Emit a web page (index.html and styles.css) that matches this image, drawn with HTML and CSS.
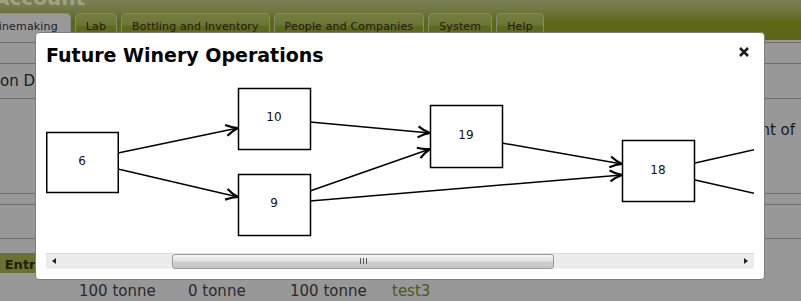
FILE: index.html
```html
<!DOCTYPE html>
<html>

<head>
  <meta charset="utf-8">
  <title>Account</title>
  <link rel="stylesheet" href="styles.css">
</head>

<body>
  <div class="header">
    <div class="brand"><span>Account</span></div>
    <ul class="tabs">
      <li class="tab active">Winemaking</li>
      <li class="tab">Lab</li>
      <li class="tab">Bottling and Inventory</li>
      <li class="tab">People and Companies</li>
      <li class="tab">System</li>
      <li class="tab">Help</li>
    </ul>
  </div>

  <div class="panel">
    <div class="row r1"></div>
    <div class="row r2">on Details</div>
    <div class="row r3"><span class="right">Amount of</span></div>
    <div class="row r4"></div>
    <div class="row r5"></div>
  </div>

  <div class="entry-label">t Entry</div>

  <div class="totals">
    <span class="c1">100 tonne</span>
    <span class="c2">0 tonne</span>
    <span class="c3">100 tonne</span>
    <span class="link">test3</span>
  </div>

  <div class="dialog">
    <div class="dialog-head">
      <h2 class="dialog-title">Future Winery Operations</h2>
      <span class="close">
        <svg width="10" height="10" viewBox="0 0 10 10">
          <path d="M1,1 L9,9 M9,1 L1,9" stroke="#1e1e1e" stroke-width="2.6" />
        </svg>
      </span>
    </div>

    <div class="scroller">
      <svg class="graph" width="708" height="168" viewBox="0 0 708 168">
        <defs>
          <marker id="arrow" viewBox="0 0 14 14" refX="13" refY="7" markerWidth="14" markerHeight="14"
            markerUnits="userSpaceOnUse" orient="auto">
            <path d="M1,1.5 Q7,5.5 13,7 Q7,8.5 1,12.5" fill="none" stroke="#000" stroke-width="2.2" />
          </marker>
        </defs>

        <g class="edges">
          <line x1="72" y1="68" x2="192" y2="43" marker-end="url(#arrow)" />
          <line x1="72" y1="84" x2="192" y2="112" marker-end="url(#arrow)" />
          <line x1="264" y1="37" x2="384" y2="48" marker-end="url(#arrow)" />
          <line x1="264" y1="106" x2="384" y2="64" marker-end="url(#arrow)" />
          <line x1="264" y1="116" x2="576" y2="90" marker-end="url(#arrow)" />
          <line x1="456" y1="58" x2="576" y2="79" marker-end="url(#arrow)" />
          <line x1="649" y1="78" x2="720" y2="62" />
          <line x1="649" y1="95" x2="720" y2="111" />
        </g>

        <g class="nodes">
          <rect x="0.75" y="47.5" width="71.5" height="60" />
          <text x="36" y="80">6</text>
          <rect x="192.5" y="3.5" width="72" height="61" />
          <text x="228" y="36">10</text>
          <rect x="192.5" y="89.5" width="72" height="61" />
          <text x="228" y="122">9</text>
          <rect x="384.5" y="20.5" width="72" height="62" />
          <text x="420" y="54">19</text>
          <rect x="576.5" y="55.5" width="72" height="61" />
          <text x="612" y="89">18</text>
        </g>
      </svg>

      <div class="hscroll">
        <span class="arrow left"></span>
        <div class="track">
          <div class="thumb"><span class="grip"></span></div>
        </div>
        <span class="arrow right"></span>
      </div>
    </div>
  </div>
</body>

</html>
```

FILE: styles.css
```css
* {
  margin: 0;
  padding: 0;
  box-sizing: border-box;
}

body {
  background-color: #989898;
  font-family: "DejaVu Sans", Verdana, sans-serif;
  color: #1c1a18;
  width: 801px;
  height: 301px;
  overflow: hidden;
}

/* header + tabs */

.header {
  height: 40px;
  overflow: hidden;
  background: linear-gradient(#7b7f55 0, #737a47 8px, #5c6818 22px, #5a6614 100%);
}

.brand {
  display: flow-root;
  height: 13px;
}

.brand span {
  display: block;
  margin-top: -12px;
  margin-left: -6px;
  font-size: 20px;
  font-weight: bold;
  line-height: 20px;
  color: #9fa383;
}

.tabs {
  list-style: none;
  display: flex;
  gap: 4px;
  height: 27px;
}

.tab {
  height: 27px;
  padding: 6px 10px 0;
  font-size: 11px;
  line-height: 14px;
  letter-spacing: 0.15px;
  color: #2a1410;
  border: 1px solid #85896d;
  border-bottom: none;
  border-radius: 5px 5px 0 0;
  background: linear-gradient(#727d40 0, #6c7736 11px, #5e6b1d 12px, #5a6717 100%);
}

.tab.active {
  margin-left: -24px;
  padding: 6px 12px 0 11px;
  background: #999999;
  border-color: #8c8c8c;
  color: #1e1e1e;
}

/* page behind the dialog */

.panel {
  margin-top: 2px;
  border-top: 1px solid #6d6d6d;
}

.row {
  border-bottom: 1px solid #6d6d6d;
  font-size: 15px;
  line-height: 18px;
}

.r1 { height: 21px; }
.r2 { height: 35px; padding-top: 8px; }
.r3 { height: 95px; padding-top: 22px; text-align: right; padding-right: 6px; }
.r4 { height: 11px; }
.r5 { height: 34px; }

.entry-label {
  margin-top: 14px;
  width: 120px;
  height: 20px;
  padding: 4px 0 0 0;
  margin-left: -6px;
  background-color: #6b7230;
  font-size: 13px;
  font-weight: bold;
  line-height: 16px;
  color: #1d2004;
}

.totals {
  display: flex;
  margin-top: 9px;
  padding-left: 79px;
  font-size: 15px;
  line-height: 18px;
  color: #2a2a2a;
}

.totals .c1 { width: 109px; }
.totals .c2 { width: 102px; }
.totals .c3 { width: 102px; }

.totals .link {
  color: #4d5718;
}

/* dialog */

.dialog {
  position: absolute;
  left: 35px;
  top: 32px;
  width: 730px;
  height: 248px;
  padding: 10px 10px 10px;
  background-color: #fff;
  border: 1px solid #7e7e7e;
  border-radius: 4px;
}

.dialog-head {
  display: flex;
  justify-content: space-between;
  align-items: flex-start;
  height: 42px;
}

.dialog-title {
  font-size: 19px;
  line-height: 24px;
  font-weight: bold;
  color: #000;
}

.close {
  margin: 4px 5px 0 0;
  width: 10px;
  height: 10px;
  display: block;
}

.close svg {
  display: block;
}

.scroller {
  width: 708px;
  height: 184px;
  overflow: hidden;
}

.graph {
  display: block;
}

.edges line {
  stroke: #000;
  stroke-width: 1.5;
}

.nodes rect {
  fill: #fff;
  stroke: #000;
  stroke-width: 1.5;
}

.nodes text {
  font-family: "DejaVu Sans", Verdana, sans-serif;
  font-size: 12px;
  text-anchor: middle;
  fill: #111;
}

/* scrollbar */

.hscroll {
  display: flex;
  align-items: center;
  height: 16px;
  background-color: #ececec;
  border-top: 1px solid #dedede;
  border-bottom: 1px solid #f4f4f4;
}

.arrow {
  width: 16px;
  height: 15px;
  display: flex;
  align-items: center;
  justify-content: center;
}

.arrow::before {
  content: "";
  border-top: 3px solid transparent;
  border-bottom: 3px solid transparent;
}

.arrow.left::before {
  border-right: 4px solid #222;
}

.arrow.right::before {
  border-left: 4px solid #222;
}

.track {
  flex: 1;
  height: 15px;
}

.thumb {
  margin-left: 110px;
  width: 382px;
  height: 15px;
  border: 1px solid #9c9c9c;
  border-radius: 3px;
  background: linear-gradient(#f6f6f6 0, #e2e2e2 45%, #cfcfcf 55%, #c6c6c6 100%);
  display: flex;
  align-items: center;
  justify-content: center;
}

.grip {
  width: 7px;
  height: 6px;
  border-left: 1px solid #555;
  border-right: 1px solid #555;
  position: relative;
}

.grip::after {
  content: "";
  position: absolute;
  left: 2px;
  top: 0;
  width: 1px;
  height: 6px;
  background-color: #555;
}
```
